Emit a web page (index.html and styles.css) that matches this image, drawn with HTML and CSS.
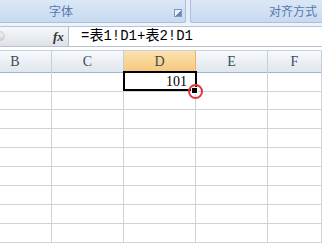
FILE: index.html
```
<!DOCTYPE html>
<html lang="zh">
<head>
    <meta charset="utf-8">
    <title>公式</title>
    <link rel="stylesheet" href="styles.css">
</head>
<body>
    <div class="ribbon">
        <div class="group font-group">
            <span class="group-label">字体</span>
            <span class="launcher"></span>
        </div>
        <div class="group align-group">
            <span class="group-label">对齐方式</span>
        </div>
    </div>
    <div class="strip"></div>
    <div class="formula-bar">
        <div class="name-box">
            <span class="round-btn"></span>
            <span class="fx">fx</span>
        </div>
        <div class="formula-input">=表1!D1+表2!D1</div>
    </div>
    <div class="sheet">
        <div class="row head">
            <div class="cell">B</div>
            <div class="cell">C</div>
            <div class="cell active-col">D</div>
            <div class="cell">E</div>
            <div class="cell">F</div>
        </div>
        <div class="row">
            <div class="cell"></div>
            <div class="cell"></div>
            <div class="cell num selected">101<span class="sel-box"></span><span class="handle"></span><span class="mark"></span></div>
            <div class="cell"></div>
            <div class="cell"></div>
        </div>
        <div class="row"><div class="cell"></div><div class="cell"></div><div class="cell"></div><div class="cell"></div><div class="cell"></div></div>
        <div class="row"><div class="cell"></div><div class="cell"></div><div class="cell"></div><div class="cell"></div><div class="cell"></div></div>
        <div class="row"><div class="cell"></div><div class="cell"></div><div class="cell"></div><div class="cell"></div><div class="cell"></div></div>
        <div class="row"><div class="cell"></div><div class="cell"></div><div class="cell"></div><div class="cell"></div><div class="cell"></div></div>
        <div class="row"><div class="cell"></div><div class="cell"></div><div class="cell"></div><div class="cell"></div><div class="cell"></div></div>
        <div class="row"><div class="cell"></div><div class="cell"></div><div class="cell"></div><div class="cell"></div><div class="cell"></div></div>
        <div class="row"><div class="cell"></div><div class="cell"></div><div class="cell"></div><div class="cell"></div><div class="cell"></div></div>
        <div class="row"><div class="cell"></div><div class="cell"></div><div class="cell"></div><div class="cell"></div><div class="cell"></div></div>
    </div>
</body>
</html>
```

FILE: styles.css
```
html, body{
    margin: 0;
    padding: 0;
    width: 322px;
    height: 245px;
    overflow: hidden;
    background: #fff;
}

/* ribbon group labels */
.ribbon{
    display: flex;
    height: 23px;
    background: #e4edf8;
}
.group{
    position: relative;
    height: 22px;
    background: linear-gradient(#dae7f6, #c8daf0);
    border-bottom: 1px solid #a9c0de;
    font-family: "Noto Sans CJK SC", sans-serif;
    font-size: 12px;
    line-height: 22px;
    color: #5479af;
}
.font-group{
    width: 185px;
    border-right: 1px solid #a9c0de;
    border-bottom-right-radius: 3px;
}
.font-group .group-label{
    padding-left: 49px;
}
.align-group{
    flex: 1;
    margin-left: 4px;
    border-left: 1px solid #a9c0de;
    border-bottom-left-radius: 3px;
}
.align-group .group-label{
    padding-left: 78px;
}
.launcher{
    position: absolute;
    left: 174px;
    top: 9px;
    width: 6px;
    height: 6px;
    border: 1px solid #7d97bd;
    background: linear-gradient(135deg, #e9f0f9 50%, #6d87b0 50%);
}

.strip{
    height: 3px;
    background: #eef3f9;
    border-bottom: 1px solid #b5c4d8;
}

/* formula bar */
.formula-bar{
    display: flex;
    height: 19px;
    border-bottom: 1px solid #b9c3cf;
}
.name-box{
    position: relative;
    width: 68px;
    background: linear-gradient(#f7f8fa, #dde2e8);
    border-right: 1px solid #b3bcc7;
}
.round-btn{
    position: absolute;
    left: -5px;
    top: 4px;
    width: 10px;
    height: 10px;
    border-radius: 50%;
    background: radial-gradient(circle at 60% 40%, #f4f4f4, #a9adb3);
}
.fx{
    position: absolute;
    left: 53px;
    top: 1px;
    font-family: "Liberation Serif", serif;
    font-style: italic;
    font-weight: bold;
    font-size: 13px;
    color: #333;
    line-height: 18px;
}
.formula-input{
    flex: 1;
    padding-left: 12px;
    font-family: "Liberation Mono", "Noto Sans CJK SC", monospace;
    font-size: 14px;
    line-height: 19px;
    color: #000;
}

/* sheet grid */
.sheet{
    width: 343px;
    margin-top: 3px;
    margin-left: -21px;
    border-top: 1px solid #c6d2e0;
}
.row{
    display: grid;
    grid-template-columns: 73px 72px 72px 72px 1fr;
    height: 19px;
}
.cell{
    box-sizing: border-box;
    border-right: 1px solid #d0d4d9;
    border-bottom: 1px solid #d0d4d9;
}
.head{
    height: 21px;
}
.head .cell{
    background: linear-gradient(#f7f9fc, #e0e6ee);
    border-right-color: #c3cfdd;
    border-bottom-color: #9fb3cb;
    text-align: center;
    font-family: "Liberation Serif", serif;
    font-size: 14px;
    line-height: 21px;
    color: #3b4a5c;
}
.head .active-col{
    background: linear-gradient(#fbe3ae, #f6c77c);
    border-right-color: #f0b460;
    border-bottom-color: #e9a64c;
}
.num{
    text-align: right;
    padding-right: 8px;
    font-family: "Liberation Serif", serif;
    font-size: 14px;
    line-height: 19px;
}
.selected{
    position: relative;
}
.sel-box{
    position: absolute;
    left: -1px;
    top: -1px;
    width: 70px;
    height: 16px;
    border: 2px solid #000;
}
.handle{
    position: absolute;
    right: -3px;
    bottom: -3px;
    width: 5px;
    height: 5px;
    background: #000;
    border: 1px solid #fff;
}
.mark{
    position: absolute;
    left: 64px;
    top: 12px;
    width: 11px;
    height: 11px;
    border: 2px solid #e0333a;
    border-radius: 50%;
}
```
